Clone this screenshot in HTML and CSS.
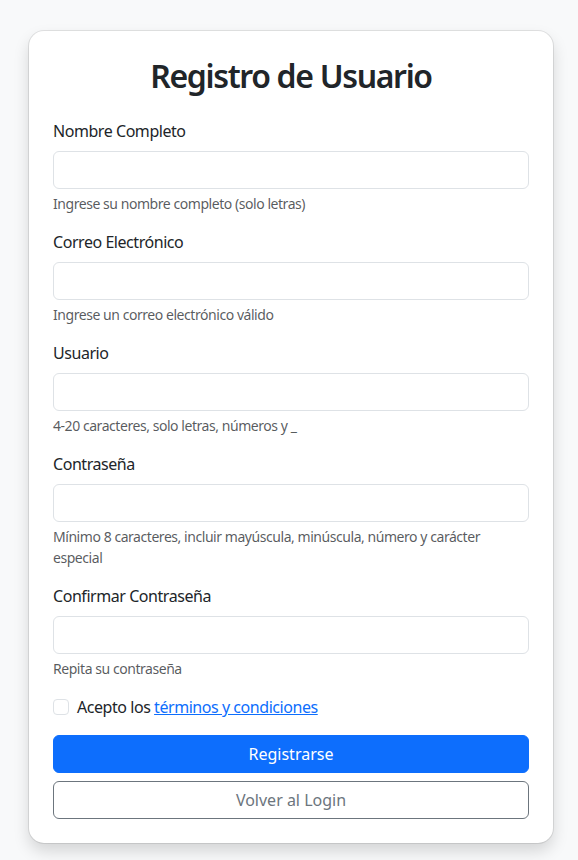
FILE: index.html
```html
<!DOCTYPE html>
<html lang="es">
<head>
<meta charset="utf-8">
<title>Registro de Usuario</title>
<link rel="stylesheet" href="styles.css">
</head>
<body>
<div class="page">
  <div class="card">
    <h2 class="title">Registro de Usuario</h2>
    <form class="form">
      <div class="group">
        <label class="label">Nombre Completo</label>
        <input class="input" type="text">
        <div class="help">Ingrese su nombre completo (solo letras)</div>
      </div>
      <div class="group">
        <label class="label">Correo Electrónico</label>
        <input class="input" type="email">
        <div class="help">Ingrese un correo electrónico válido</div>
      </div>
      <div class="group">
        <label class="label">Usuario</label>
        <input class="input" type="text">
        <div class="help">4-20 caracteres, solo letras, números y _</div>
      </div>
      <div class="group">
        <label class="label">Contraseña</label>
        <input class="input" type="password">
        <div class="help">Mínimo 8 caracteres, incluir mayúscula, minúscula, número y carácter especial</div>
      </div>
      <div class="group">
        <label class="label">Confirmar Contraseña</label>
        <input class="input" type="password">
        <div class="help">Repita su contraseña</div>
      </div>
      <div class="check">
        <span class="box"></span>
        <span class="check-label">Acepto los <a href="#" class="link">términos y condiciones</a></span>
      </div>
      <div class="actions">
        <button type="button" class="btn btn-primary">Registrarse</button>
        <button type="button" class="btn btn-outline">Volver al Login</button>
      </div>
    </form>
  </div>
</div>
</body>
</html>
```
FILE: styles.css
```css
* { box-sizing: border-box; }
html, body { margin: 0; padding: 0; }
body {
  background: #f8f9fa;
  color: #212529;
  font-family: "Noto Sans", "Liberation Sans", sans-serif;
  font-size: 16px;
  line-height: 1.5;
  letter-spacing: -0.028em;
}
.page {
  padding: 31px 25px 17px 29px;
}
.card {
  width: 524px;
  background: #fff;
  border-radius: 15px;
  padding: 26px 24px 24px;
  box-shadow: 0 0 0 1px rgba(0,0,0,0.09), 0 8px 16px rgba(0,0,0,0.15);
}
.title {
  margin: 0 0 24px;
  font-size: 32px;
  font-weight: 600;
  line-height: 1.2;
  letter-spacing: -0.042em;
  text-align: center;
}
.form { display: flex; flex-direction: column; }
.group { display: flex; flex-direction: column; margin-bottom: 16px; }
.label { display: block; margin-bottom: 8px; line-height: 24px; }
.input {
  display: block;
  width: 100%;
  height: 38px;
  border: 1px solid #dee2e6;
  border-radius: 6px;
  background: #fff;
  font: inherit;
  padding: 6px 12px;
  margin: 0;
}
.help {
  margin-top: 4px;
  font-size: 14px;
  line-height: 21px;
  color: rgba(33,37,41,0.75);
}
.check {
  display: flex;
  align-items: flex-start;
  gap: 8px;
  min-height: 24px;
  margin-bottom: 16px;
}
.box {
  flex: none;
  width: 16px;
  height: 16px;
  margin-top: 4px;
  border: 1px solid #dee2e6;
  border-radius: 4px;
  background: #fff;
}
.check-label { line-height: 24px; }
.link { color: #0d6efd; text-decoration: underline; }
.actions { display: flex; flex-direction: column; gap: 8px; }
.btn {
  display: block;
  width: 100%;
  height: 38px;
  font: inherit;
  line-height: 24px;
  padding: 6px 12px;
  border-radius: 6px;
  border: 1px solid transparent;
  text-align: center;
  margin: 0;
}
.btn-primary { background: #0d6efd; border-color: #0d6efd; color: #fff; }
.btn-outline { background: transparent; border-color: #6c757d; color: #6c757d; }
```
